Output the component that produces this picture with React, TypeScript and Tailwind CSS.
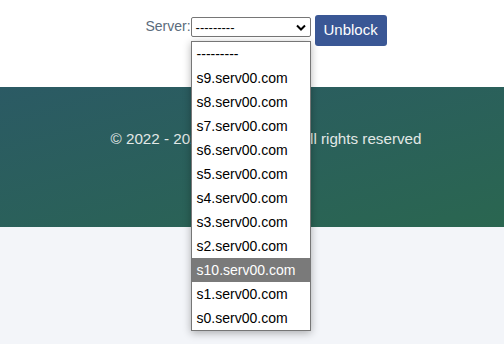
import React from "react";

const servers = [
  "---------",
  "s9.serv00.com",
  "s8.serv00.com",
  "s7.serv00.com",
  "s6.serv00.com",
  "s5.serv00.com",
  "s4.serv00.com",
  "s3.serv00.com",
  "s2.serv00.com",
  "s10.serv00.com",
  "s1.serv00.com",
  "s0.serv00.com",
];

export default function App() {
  const active = "s10.serv00.com";
  return (
    <div className="min-h-[344px] bg-[#f3f5f9] font-['Liberation_Sans',Arial,sans-serif]">
      <div className="h-[87px] bg-white flex justify-center pl-[28px] pt-[15px]">
        <div className="flex items-start">
          <span className="text-[14px] text-[#5b6b7c] mt-[4px] leading-none">Server:</span>
          <div className="relative mt-[2px]">
            <div className="w-[120px] h-[20px] border border-[#767676] rounded-[2px] bg-white flex items-center justify-between pl-[4px] pr-[4px]">
              <span className="text-[13px] text-black leading-none">---------</span>
              <svg width="10" height="7" viewBox="0 0 10 7">
                <path d="M1 1.5 L5 5.5 L9 1.5" fill="none" stroke="#000" strokeWidth="2" />
              </svg>
            </div>
            <ul className="absolute left-0 top-[24px] w-[120px] bg-white border border-[#767676] shadow-[0_2px_8px_rgba(0,0,0,0.3)] z-10">
              {servers.map((s) => (
                <li
                  key={s}
                  className={
                    s === active
                      ? "h-[24px] flex items-center pl-[5px] text-[14px] bg-[#7a7a7a] text-white"
                      : "h-[24px] flex items-center pl-[5px] text-[14px] text-black"
                  }
                >
                  {s}
                </li>
              ))}
            </ul>
          </div>
          <button className="ml-[4px] h-[31px] w-[72px] rounded-[3px] bg-[#3a5795] text-white text-[15px]">
            Unblock
          </button>
        </div>
      </div>
      <footer className="h-[140px] bg-gradient-to-br from-[#2b5a64] to-[#2a6650] flex justify-center pl-[28px] pt-[41px]">
        <p className="text-[15.2px] text-[#e2e8e6]">© 2022 - 2025 Serv00.com. All rights reserved</p>
      </footer>
    </div>
  );
}
